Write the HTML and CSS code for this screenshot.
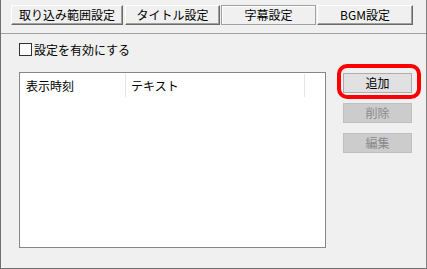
FILE: index.html
```html
<!DOCTYPE html>
<html>
<head>
    <title>字幕設定</title>
    <link rel="stylesheet" href="styles.css">
</head>
<body>
    <div class="window">
        <div class="tabs">
            <button class="tab tab-wide">取り込み範囲設定</button>
            <button class="tab">タイトル設定</button>
            <button class="tab active">字幕設定</button>
            <button class="tab tab-last">BGM設定</button>
        </div>
        <label class="check"><span class="box"></span>設定を有効にする</label>
        <div class="main">
            <div class="list">
                <div class="list-head">
                    <div class="col col-time">表示時刻</div>
                    <div class="col col-text">テキスト</div>
                </div>
            </div>
            <div class="actions">
                <div class="mark-wrap">
                    <button class="act">追加</button>
                    <span class="mark"></span>
                </div>
                <button class="act" disabled>削除</button>
                <button class="act" disabled>編集</button>
            </div>
        </div>
    </div>
</body>
</html>
```

FILE: styles.css
```css
body {
    margin: 0;
    font-family: "Noto Sans CJK JP", "Noto Sans", sans-serif;
    font-size: 12px;
    color: #000;
}

.window {
    width: 427px;
    height: 269px;
    box-sizing: border-box;
    background: #f0f0f0;
    border-left: 1px solid #707070;
    border-right: 1px solid #808080;
    border-bottom: 1px solid #707070;
}

.tabs {
    display: flex;
    gap: 1px;
    height: 34px;
    box-sizing: border-box;
    padding: 5px 0 0 10px;
    border-bottom: 1px solid #a0a0a0;
}

.tab {
    width: 95px;
    height: 20px;
    padding: 0;
    font: inherit;
    line-height: 18px;
    color: #000;
    background: #f0f0f0;
    border: 1px solid;
    border-color: #fff #696969 #696969 #fff;
    box-shadow: inset -1px -1px 0 #a0a0a0;
}

.tab-wide {
    width: 112px;
    margin-right: 1px;
}

.tab-last {
    width: 96px;
}

.tab.active {
    border-color: #a0a0a0;
    box-shadow: inset 1px 1px 0 #fff;
}

.check {
    display: flex;
    align-items: center;
    height: 13px;
    line-height: 13px;
    margin: 9px 0 0 18px;
}

.box {
    width: 13px;
    height: 13px;
    box-sizing: border-box;
    border: 1px solid #333;
    background: #fff;
    margin-right: 2px;
}

.main {
    display: flex;
    margin-top: 16px;
    padding-left: 18px;
}

.list {
    width: 307px;
    height: 176px;
    box-sizing: border-box;
    border: 1px solid #828790;
    background: #fff;
}

.list-head {
    display: flex;
}

.col {
    height: 23px;
    margin-top: 1px;
    line-height: 23px;
    border-right: 1px solid #e5e5e5;
    box-sizing: border-box;
}

.col-time {
    width: 106px;
    padding-left: 6px;
}

.col-text {
    width: 179px;
    padding-left: 5px;
}

.actions {
    display: flex;
    flex-direction: column;
    gap: 10px;
    margin-left: 17px;
    padding-top: 1px;
}

.act {
    width: 69px;
    height: 20px;
    padding: 0;
    font: inherit;
    line-height: 18px;
    color: #000;
    background: #e1e1e1;
    border: 1px solid #adadad;
}

.act:disabled {
    color: #8a8a8a;
    background: #cccccc;
    border-color: #bfbfbf;
}

.mark-wrap {
    position: relative;
    height: 20px;
}

.mark {
    position: absolute;
    left: -6px;
    top: -9px;
    width: 84px;
    height: 35px;
    box-sizing: border-box;
    border: 4px solid #f00;
    border-radius: 10px;
    pointer-events: none;
}
```
